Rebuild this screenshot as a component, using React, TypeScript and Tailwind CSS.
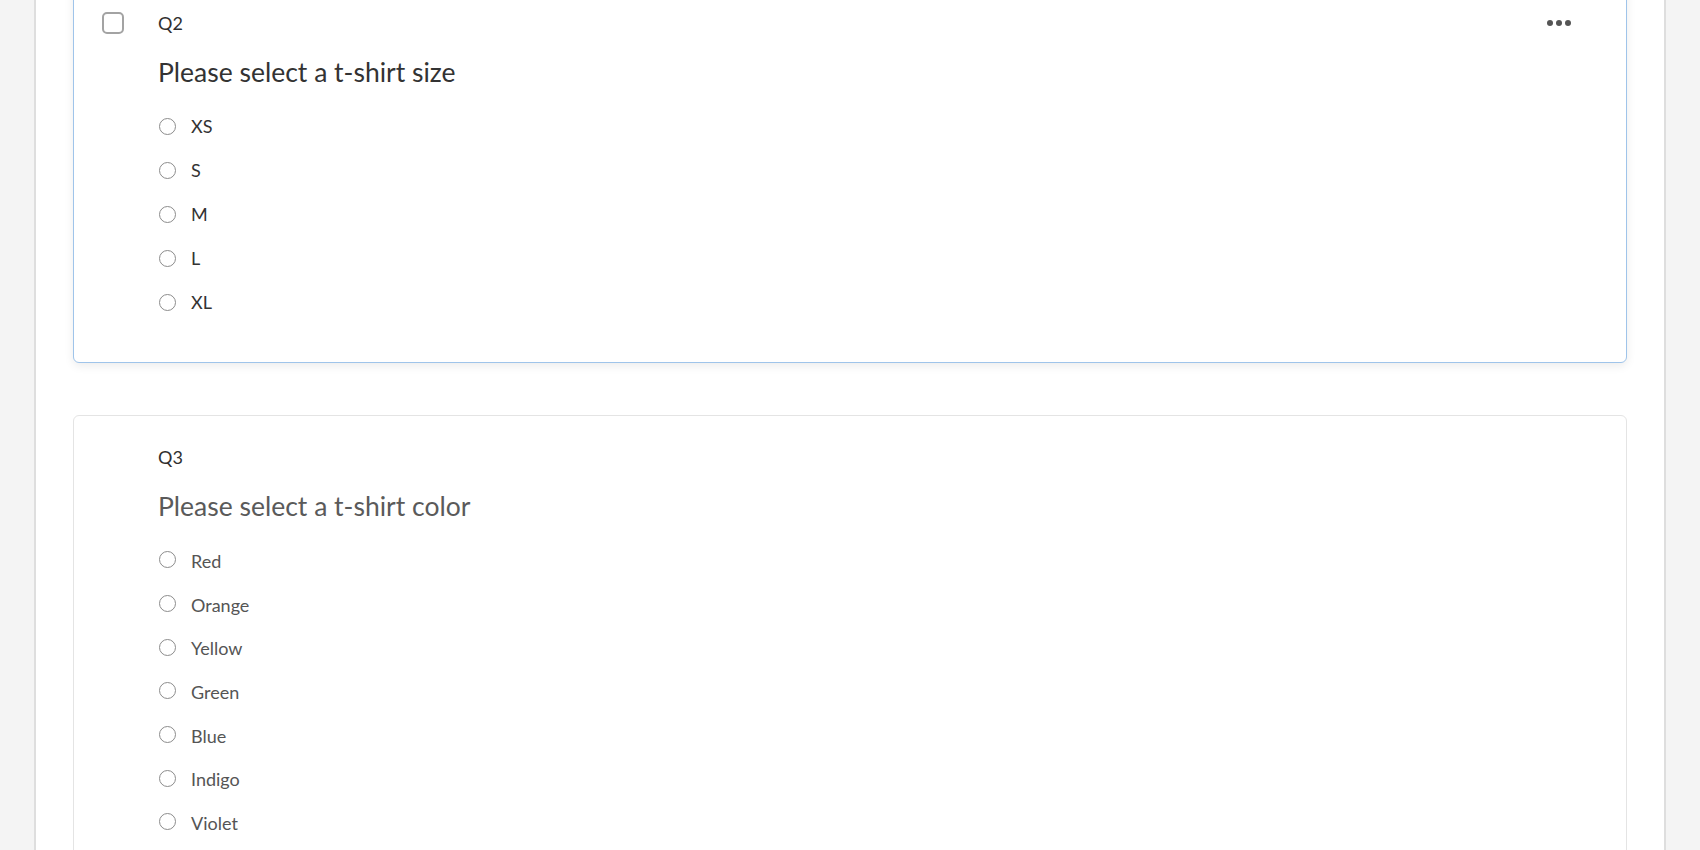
import React from 'react';

const font = { fontFamily: 'Lato, "Open Sans", Arial, sans-serif' };

function Radio() {
  return <span className="w-[17px] h-[17px] rounded-full border-[1.5px] border-[#8c8c8c] bg-white shrink-0" />;
}

function Question({
  id,
  title,
  options,
  selected,
  dim,
  rowClass,
}: {
  id: string;
  title: string;
  options: string[];
  selected?: boolean;
  dim?: boolean;
  rowClass: string;
}) {
  return (
    <div
      className={
        'bg-white rounded-[6px] border ' +
        (selected
          ? 'border-[#9fc4ea] shadow-[0_3px_10px_rgba(0,0,0,0.08)] pb-[38px]'
          : 'border-[#e4e4e4] pb-[40px]')
      }
    >
      <div className="flex items-center h-[82px]">
        <div className="w-[84px] flex justify-end pr-[34px]">
          {selected && <span className="w-[22px] h-[22px] rounded-[5px] border-[2px] border-[#a3a3a3] bg-white" />}
        </div>
        <span className="text-[18px] text-[#2f2f2f]">{id}</span>
        {selected && (
          <div className="ml-auto mr-[55px] flex gap-[3px]">
            <span className="w-[6px] h-[6px] rounded-full bg-[#555]" />
            <span className="w-[6px] h-[6px] rounded-full bg-[#555]" />
            <span className="w-[6px] h-[6px] rounded-full bg-[#555]" />
          </div>
        )}
      </div>
      <div className="pl-[84px] -mt-[10px]">
        <h2 className={'text-[26.5px] leading-[36px] ' + (dim ? 'text-[#5a5a5a]' : 'text-[#333]')}>{title}</h2>
        <div className="mt-[14px] -ml-[1px]">
          {options.map((o) => (
            <label key={o} className={'flex items-center gap-[15px] ' + rowClass}>
              <span className="pl-[2px] flex">
                <Radio />
              </span>
              <span className={'text-[18px] ' + (dim ? 'text-[#555] mt-[3px]' : 'text-[#333]')}>{o}</span>
            </label>
          ))}
        </div>
      </div>
    </div>
  );
}

export default function App() {
  return (
    <div className="h-[850px] overflow-hidden bg-[#f4f4f4]" style={font}>
      <div className="mx-[34px] h-full flex flex-col bg-white border-x-2 border-[#dedede] px-[37px]">
        <div className="-mt-[19px] flex flex-col gap-[52px]">
          <Question
            id="Q2"
            title="Please select a t-shirt size"
            options={['XS', 'S', 'M', 'L', 'XL']}
            selected
            rowClass="h-[44px]"
          />
          <Question
            id="Q3"
            title="Please select a t-shirt color"
            options={['Red', 'Orange', 'Yellow', 'Green', 'Blue', 'Indigo', 'Violet']}
            dim
            rowClass="h-[43.7px]"
          />
        </div>
      </div>
    </div>
  );
}
